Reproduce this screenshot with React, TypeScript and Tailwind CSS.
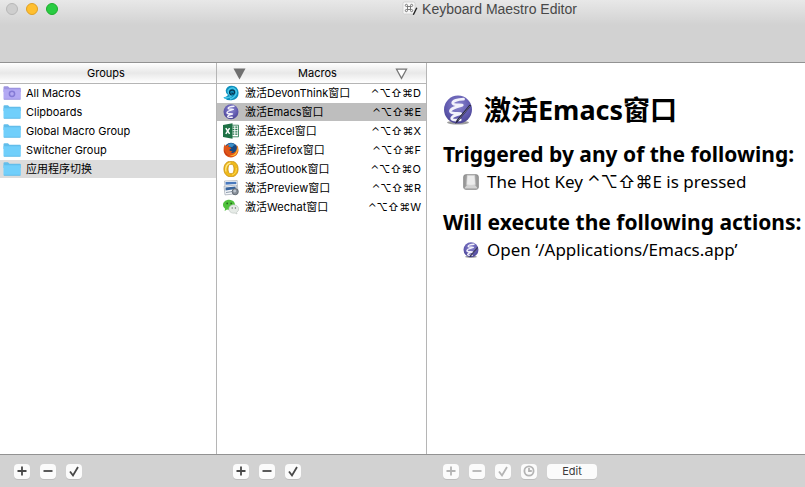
import { useState } from "react";
import type { ReactNode } from "react";

function Folder({ smart }: { smart?: boolean }) {
  const back = smart ? "#9d94e0" : "#62bdea";
  const front = smart ? "#b3a9f3" : "#70cffb";
  return (
    <svg viewBox="0 0 18 14" className="h-[14px] w-[18px] shrink-0" aria-hidden="true">
      <path d="M.5 1.5Q.5.3 1.5.3H5l1.4 1.5H17q.8 0 .8.9V6H.5Z" fill={back} />
      <path d="M.5 3.3H17.8V12.6q0 .9-.9.9H1.4q-.9 0-.9-.9Z" fill={front} />
      <path d="M.8 13.3H17.5" stroke={smart ? "#9389d8" : "#58b4e3"} strokeWidth=".7" />
      {smart && <circle cx="9" cy="7.8" r="2.6" fill="none" stroke="#857bd6" strokeWidth="1.5" />}
    </svg>
  );
}

function DevonThink() {
  return (
    <svg viewBox="0 0 16 16" className="size-4" aria-hidden="true">
      <path d="M.3 12.2Q3.8 15.8 8.6 15.2 15.6 14.4 15.6 7.8 15 1 8.7.8 3.6 1 2.7 5.5 2.6 8.6 5 9.9 3.4 12 .3 12.2Z" fill="#0e8fbd" />
      <path d="M1.2 12.9Q6.4 13 8.2 11 4.6 8.6 5.2 5.4 7 2.2 10.5 3.1 14.2 5 13 9 11.6 12.6 7 14" fill="none" stroke="#4bc9ea" strokeWidth="1.5" />
      <path d="M8.6 10.2Q5.6 8.4 7 6 8.9 4.3 11 5.6 12.4 7.6 10.6 9.1 8.8 8.9 9 7.5" fill="none" stroke="#07344e" strokeWidth="1.2" />
    </svg>
  );
}

function Emacs({ className, pen }: { className: string; pen?: boolean }) {
  return (
    <svg viewBox="0 0 30 30" className={className} aria-hidden="true">
      <defs>
        <radialGradient id="emacsBall" cx="50%" cy="35%" r="65%">
          <stop offset="0" stopColor="#8c88cf" />
          <stop offset=".65" stopColor="#625bb0" />
          <stop offset="1" stopColor="#4b4594" />
        </radialGradient>
      </defs>
      {pen && <ellipse cx="15" cy="27.6" rx="11" ry="1.9" fill="#7b7b7b" opacity=".75" />}
      <circle cx="15" cy="14.6" r="14" fill="url(#emacsBall)" />
      <path d="M20.5 4.2C15 4.4 9.3 5.8 9.8 8.3 10.2 10.4 15.8 9.6 19.2 10.1 14 11.7 7 13.5 7.5 16.5 8 19 14.5 18.2 17.7 18.6 13.5 19.8 8.2 21.3 8.8 23.8 9.2 25.8 14.5 25 17.2 24.8" fill="none" stroke="#f2f1fb" strokeWidth="2.8" strokeLinecap="round" strokeLinejoin="round" />
      {pen && (
        <>
          <path d="M28.3 10.6 15.3 26.2 12.3 29 13.6 25 26.5 9.8Z" fill="#24233c" />
          <path d="M27 11 15 25.3" stroke="#8583a6" strokeWidth=".7" />
        </>
      )}
    </svg>
  );
}

function Excel() {
  return (
    <svg viewBox="0 0 16 16" className="size-4" aria-hidden="true">
      <path d="M8 2.2H15.5V13.8H8Z" fill="#fff" stroke="#1e7145" strokeWidth=".8" />
      <path d="M9.5 4.2H11.3M12.3 4.2H14.4M9.5 6.5H11.3M12.3 6.5H14.4M9.5 8.8H11.3M12.3 8.8H14.4M9.5 11.1H11.3M12.3 11.1H14.4" stroke="#1e7145" strokeWidth="1.3" />
      <path d="M0 2 9.5.3V15.7L0 14Z" fill="#1e7145" />
      <path d="M2.8 5.2 6.6 10.8M6.6 5.2 2.8 10.8" stroke="#fff" strokeWidth="1.5" />
    </svg>
  );
}

function Firefox() {
  return (
    <svg viewBox="0 0 16 16" className="size-4" aria-hidden="true">
      <circle cx="8" cy="7.6" r="6.8" fill="#174a83" />
      <path d="M4 3Q8-.4 12.3 3 10.4 3.2 9.3 5 6 5.4 4 3Z" fill="#3b8fc8" />
      <path d="M1.7 2.2Q.2 5 .6 8.4C1 12.5 4 15.4 8 15.4 12.4 15.4 15.4 12 15.5 8Q15.5 4.4 13.4 2.4 14.4 7 12.6 9.3 10.6 11.7 7.5 10.5 9.3 10.3 9.6 9.1 7.8 9.4 6.3 8.2 6.3 7.3 8.4 6.5 7.5 5 5.5 5.1 5.3 4 6 2.7 4.2 2.6 3.2 4 2 3.7 1.7 2.2Z" fill="#df5517" />
      <path d="M14.2 4Q16 9 12.8 12.4 10 14.8 6.4 13.5 11.4 13.7 13.3 9.8 14.3 7.2 14.2 4Z" fill="#ffc331" />
      <path d="M1.4 6Q1 9 3 11.5 4.8 13.4 7 13.8 2.5 14 1.2 9.6Z" fill="#b82b18" />
    </svg>
  );
}

function Outlook() {
  return (
    <svg viewBox="0 0 16 16" className="size-4" aria-hidden="true">
      <path d="M8 .2C3.6.2.9 3.4.9 8S3.6 15.8 8 15.8 15.1 12.6 15.1 8 12.4.2 8 .2ZM8 3.2C10 3.2 11 5 11 8S10 12.8 8 12.8 5 11 5 8 6 3.2 8 3.2Z" fill="#eeb91c" fillRule="evenodd" stroke="#c08505" strokeWidth=".7" />
      <path d="M2.9 10.5Q1.8 3.4 7.5 1.8" fill="none" stroke="#ffe98a" strokeWidth="1.2" />
      <path d="M13.4 7Q13.4 13 9 14" fill="none" stroke="#ffd84d" strokeWidth="1" />
    </svg>
  );
}

function Preview() {
  return (
    <svg viewBox="0 0 16 16" className="size-4" aria-hidden="true">
      <path d="M1.5 1 14.2.5 14.8 10.8 2.4 12Z" fill="#fff" stroke="#a8adb5" strokeWidth=".7" />
      <path d="M2.5 2.1 13.3 1.7 13.4 4 2.6 4.8Z" fill="#4979bd" />
      <path d="M1 6.3 13.5 5 14 13.8 2 14.9Z" fill="#f4f6f9" stroke="#9ba3af" strokeWidth=".7" />
      <path d="M2.5 7.5 12.5 6.6 12.7 9 2.6 10.5Z" fill="#38649c" />
      <path d="M3 12.5 9 11.6" stroke="#8c9bad" />
      <circle cx="12.2" cy="11.7" r="3.1" fill="#899099" stroke="#555e69" strokeWidth=".8" />
      <circle cx="11.7" cy="11" r="1.4" fill="#bcc4cf" />
    </svg>
  );
}

function Wechat() {
  return (
    <svg viewBox="0 0 16 16" className="size-4" aria-hidden="true">
      <path d="M6.2.8C2.8.8 0 3 0 5.8 0 7.4.8 8.7 2.1 9.7L1.6 11.9 4 10.6Q9 11.5 11.5 8.3C13.3 4.5 10.4.8 6.2.8Z" fill="#4fc23c" />
      <circle cx="4.2" cy="4.4" r=".9" fill="#256b1d" />
      <circle cx="8.2" cy="4.4" r=".9" fill="#256b1d" />
      <path d="M10.7 5.8C7.9 5.8 5.9 7.7 5.9 10 5.9 12.8 8.8 14.7 12 14L14 15 13.6 13.3Q15.8 12 15.7 9.9C15.5 7.6 13.5 5.8 10.7 5.8Z" fill="#e6ebe7" stroke="#b7c0ba" strokeWidth=".6" />
      <circle cx="9.2" cy="9" r=".7" fill="#687069" />
      <circle cx="12.4" cy="9" r=".7" fill="#687069" />
    </svg>
  );
}

function AppIcon() {
  return (
    <svg viewBox="0 0 16 16" className="size-4" aria-hidden="true">
      <rect x="1" y="1" width="12" height="12" rx="1.5" fill="#f6f6f6" stroke="#c9c9c9" strokeWidth=".7" />
      <path d="M5.5 5.5H8.5V8.5H5.5ZM5.5 5.5H4.6A1.1 1.1 0 1 1 5.5 4.4ZM8.5 5.5V4.4A1.1 1.1 0 1 1 9.4 5.5ZM5.5 8.5V9.6A1.1 1.1 0 1 1 4.6 8.5ZM8.5 8.5H9.4A1.1 1.1 0 1 1 8.5 9.6Z" fill="none" stroke="#6d6d6d" strokeWidth=".9" />
      <path d="M14.8 6.8 11.3 13.7" stroke="#222" strokeWidth="1.4" />
    </svg>
  );
}

function KeyCap() {
  return (
    <svg viewBox="0 0 16 16" className="size-4" aria-hidden="true">
      <rect x=".7" y=".7" width="14.6" height="14.6" rx="2" fill="#9c9c9c" stroke="#7c7c7c" strokeWidth=".8" />
      <path d="M1.2 14.6 4 11H12L14.8 14.6Z" fill="#d4d4d4" />
      <path d="M4.2 1.2H11.8L12.4 10.8Q8 12 3.6 10.8Z" fill="#ececec" stroke="#c9c9c9" strokeWidth=".6" />
    </svg>
  );
}

const groups = ["All Macros", "Clipboards", "Global Macro Group", "Switcher Group", "应用程序切换"];

const macros: { name: string; keyName: string; icon: ReactNode }[] = [
  { name: "激活DevonThink窗口", keyName: "D", icon: <DevonThink /> },
  { name: "激活Emacs窗口", keyName: "E", icon: <Emacs className="size-4" /> },
  { name: "激活Excel窗口", keyName: "X", icon: <Excel /> },
  { name: "激活Firefox窗口", keyName: "F", icon: <Firefox /> },
  { name: "激活Outlook窗口", keyName: "O", icon: <Outlook /> },
  { name: "激活Preview窗口", keyName: "R", icon: <Preview /> },
  { name: "激活Wechat窗口", keyName: "W", icon: <Wechat /> },
];

const glyphs = {
  add: <path d="M8 3.5V12.5M3.5 8H12.5" />,
  remove: <path d="M3.5 8H12.5" />,
  enable: <path d="M4 8.5 7 12.5 12 4" />,
  recent: (
    <>
      <circle cx="8" cy="8" r="4.6" />
      <path d="M8 5V8H10.8" />
    </>
  ),
};

function ToolButton({ kind, label, disabled }: { kind: keyof typeof glyphs; label: string; disabled?: boolean }) {
  return (
    <button
      type="button"
      aria-label={label}
      disabled={disabled}
      className="flex h-[15px] w-4 items-center justify-center rounded-[4px] bg-[#fbfbfb] text-[#484848] shadow-[0_1px_0_#bebebe] disabled:text-[#b4b4b4]"
    >
      <svg viewBox="0 0 16 16" className="size-4 shrink-0" fill="none" stroke="currentColor" strokeWidth="1.8" aria-hidden="true">
        {glyphs[kind]}
      </svg>
    </button>
  );
}

const headerClass =
  "flex h-[21px] shrink-0 items-center border-b border-[#b5b5b5] bg-linear-to-b from-white via-[#e8e8e8] to-white pt-px text-[11px]";

export default function App() {
  const [group, setGroup] = useState(4);
  const [macro, setMacro] = useState(1);

  return (
    <div className="flex min-h-screen flex-col bg-white font-[Inter,'Noto_Sans_CJK_SC',sans-serif] text-[11px] text-black">
      <header className="grid h-[63px] grid-cols-[1fr_auto_1fr] items-start border-b border-[#929292] bg-linear-to-b from-[#e8e8e8] to-[#d2d2d2] to-40% px-[6px] pt-px">
        <div className="flex gap-2 pt-[2px]">
          <button type="button" aria-label="Close" className="size-3 rounded-full border border-[#b7b7b7] bg-[#cecece]" />
          <button type="button" aria-label="Minimize" className="size-3 rounded-full border border-[#dfa023] bg-[#ffbf2f]" />
          <button type="button" aria-label="Zoom" className="size-3 rounded-full border border-[#1dad2c] bg-[#29cc42]" />
        </div>
        <h1 className="col-start-2 ml-[174px] flex h-4 items-center gap-1 font-['Liberation_Sans',sans-serif] text-[14px] text-[#484848]">
          <AppIcon />
          Keyboard Maestro Editor
        </h1>
      </header>

      <main className="grid flex-1 grid-cols-[217px_210px_minmax(0,1fr)]">
        <section className="flex flex-col border-r border-[#b5b5b5]">
          <h2 className={`${headerClass} justify-center pr-1`}>Groups</h2>
          <ul>
            {groups.map((name, i) => (
              <li key={name} className="pb-px">
                <button
                  type="button"
                  aria-pressed={group === i}
                  onClick={() => setGroup(i)}
                  className={`flex h-[18px] w-full items-center gap-[5px] px-[3px] ${group === i ? "bg-[#dcdcdc]" : ""}`}
                >
                  <Folder smart={i === 0} />
                  {name}
                </button>
              </li>
            ))}
          </ul>
        </section>

        <section className="flex flex-col border-r border-[#b5b5b5]">
          <div className={`${headerClass} pr-[18px] pl-4`}>
            <button type="button" aria-label="Filter macros">
              <svg viewBox="0 0 13 12" className="h-3 w-[13px]" aria-hidden="true">
                <path d="M.5.5H12.5L6.5 11.5Z" fill="#707070" />
              </svg>
            </button>
            <h2 className="flex-1 pr-[6px] text-center">Macros</h2>
            <button type="button" aria-label="Sort macros">
              <svg viewBox="0 0 13 12" className="h-3 w-[13px]" aria-hidden="true">
                <path d="M1.5 1.2H11.5L6.5 10.4Z" fill="#fff" stroke="#777" strokeWidth="1.3" />
              </svg>
            </button>
          </div>
          <ul>
            {macros.map((m, i) => (
              <li key={m.name} className="pb-px">
                <button
                  type="button"
                  aria-pressed={macro === i}
                  onClick={() => setMacro(i)}
                  className={`flex h-[18px] w-full items-center gap-[6px] pr-[5px] pl-[6px] ${macro === i ? "bg-[#bebebe]" : ""}`}
                >
                  {m.icon}
                  <span>{m.name}</span>
                  <span className="ml-auto font-[Inter,'DejaVu_Sans',sans-serif]">⌃⌥⇧⌘{m.keyName}</span>
                </button>
              </li>
            ))}
          </ul>
        </section>

        <article className="px-4 pt-[27px] font-['Noto_Sans','Noto_Sans_CJK_SC',sans-serif] whitespace-nowrap">
          <h2 className="flex h-10 items-center gap-[11px] text-[27px] font-bold">
            <Emacs className="size-[30px]" pen />
            激活Emacs窗口
          </h2>
          <h3 className="mt-2 h-8 text-[21px] leading-8 font-bold">Triggered by any of the following:</h3>
          <p className="flex h-6 items-center gap-2 pl-5 text-[17px]">
            <KeyCap />
            <span className="font-['Noto_Sans',Inter,'DejaVu_Sans',sans-serif]">The Hot Key ⌃⌥⇧⌘E is pressed</span>
          </p>
          <h3 className="mt-3 h-8 text-[21px] leading-8 font-bold">Will execute the following actions:</h3>
          <p className="flex h-6 items-center gap-2 pl-5 text-[17px]">
            <Emacs className="size-4" pen />
            Open ‘/Applications/Emacs.app’
          </p>
        </article>
      </main>

      <footer className="grid h-[33px] grid-cols-[217px_210px_minmax(0,1fr)] items-center border-t border-[#929292] bg-[#d2d2d2]">
        <div className="flex gap-[10px] pl-[14px]">
          <ToolButton kind="add" label="Add group" />
          <ToolButton kind="remove" label="Remove group" />
          <ToolButton kind="enable" label="Enable group" />
        </div>
        <div className="flex gap-[10px] pl-4">
          <ToolButton kind="add" label="Add macro" />
          <ToolButton kind="remove" label="Remove macro" />
          <ToolButton kind="enable" label="Enable macro" />
        </div>
        <div className="flex gap-[10px] pl-4">
          <ToolButton kind="add" label="Add action" disabled />
          <ToolButton kind="remove" label="Remove action" disabled />
          <ToolButton kind="enable" label="Enable action" disabled />
          <ToolButton kind="recent" label="Recent" disabled />
          <button type="button" className="flex h-[15px] w-[50px] items-center justify-center rounded-[4px] bg-[#fbfbfb] text-[#3c3c3c] shadow-[0_1px_0_#bebebe]">
            Edit
          </button>
        </div>
      </footer>
    </div>
  );
}
